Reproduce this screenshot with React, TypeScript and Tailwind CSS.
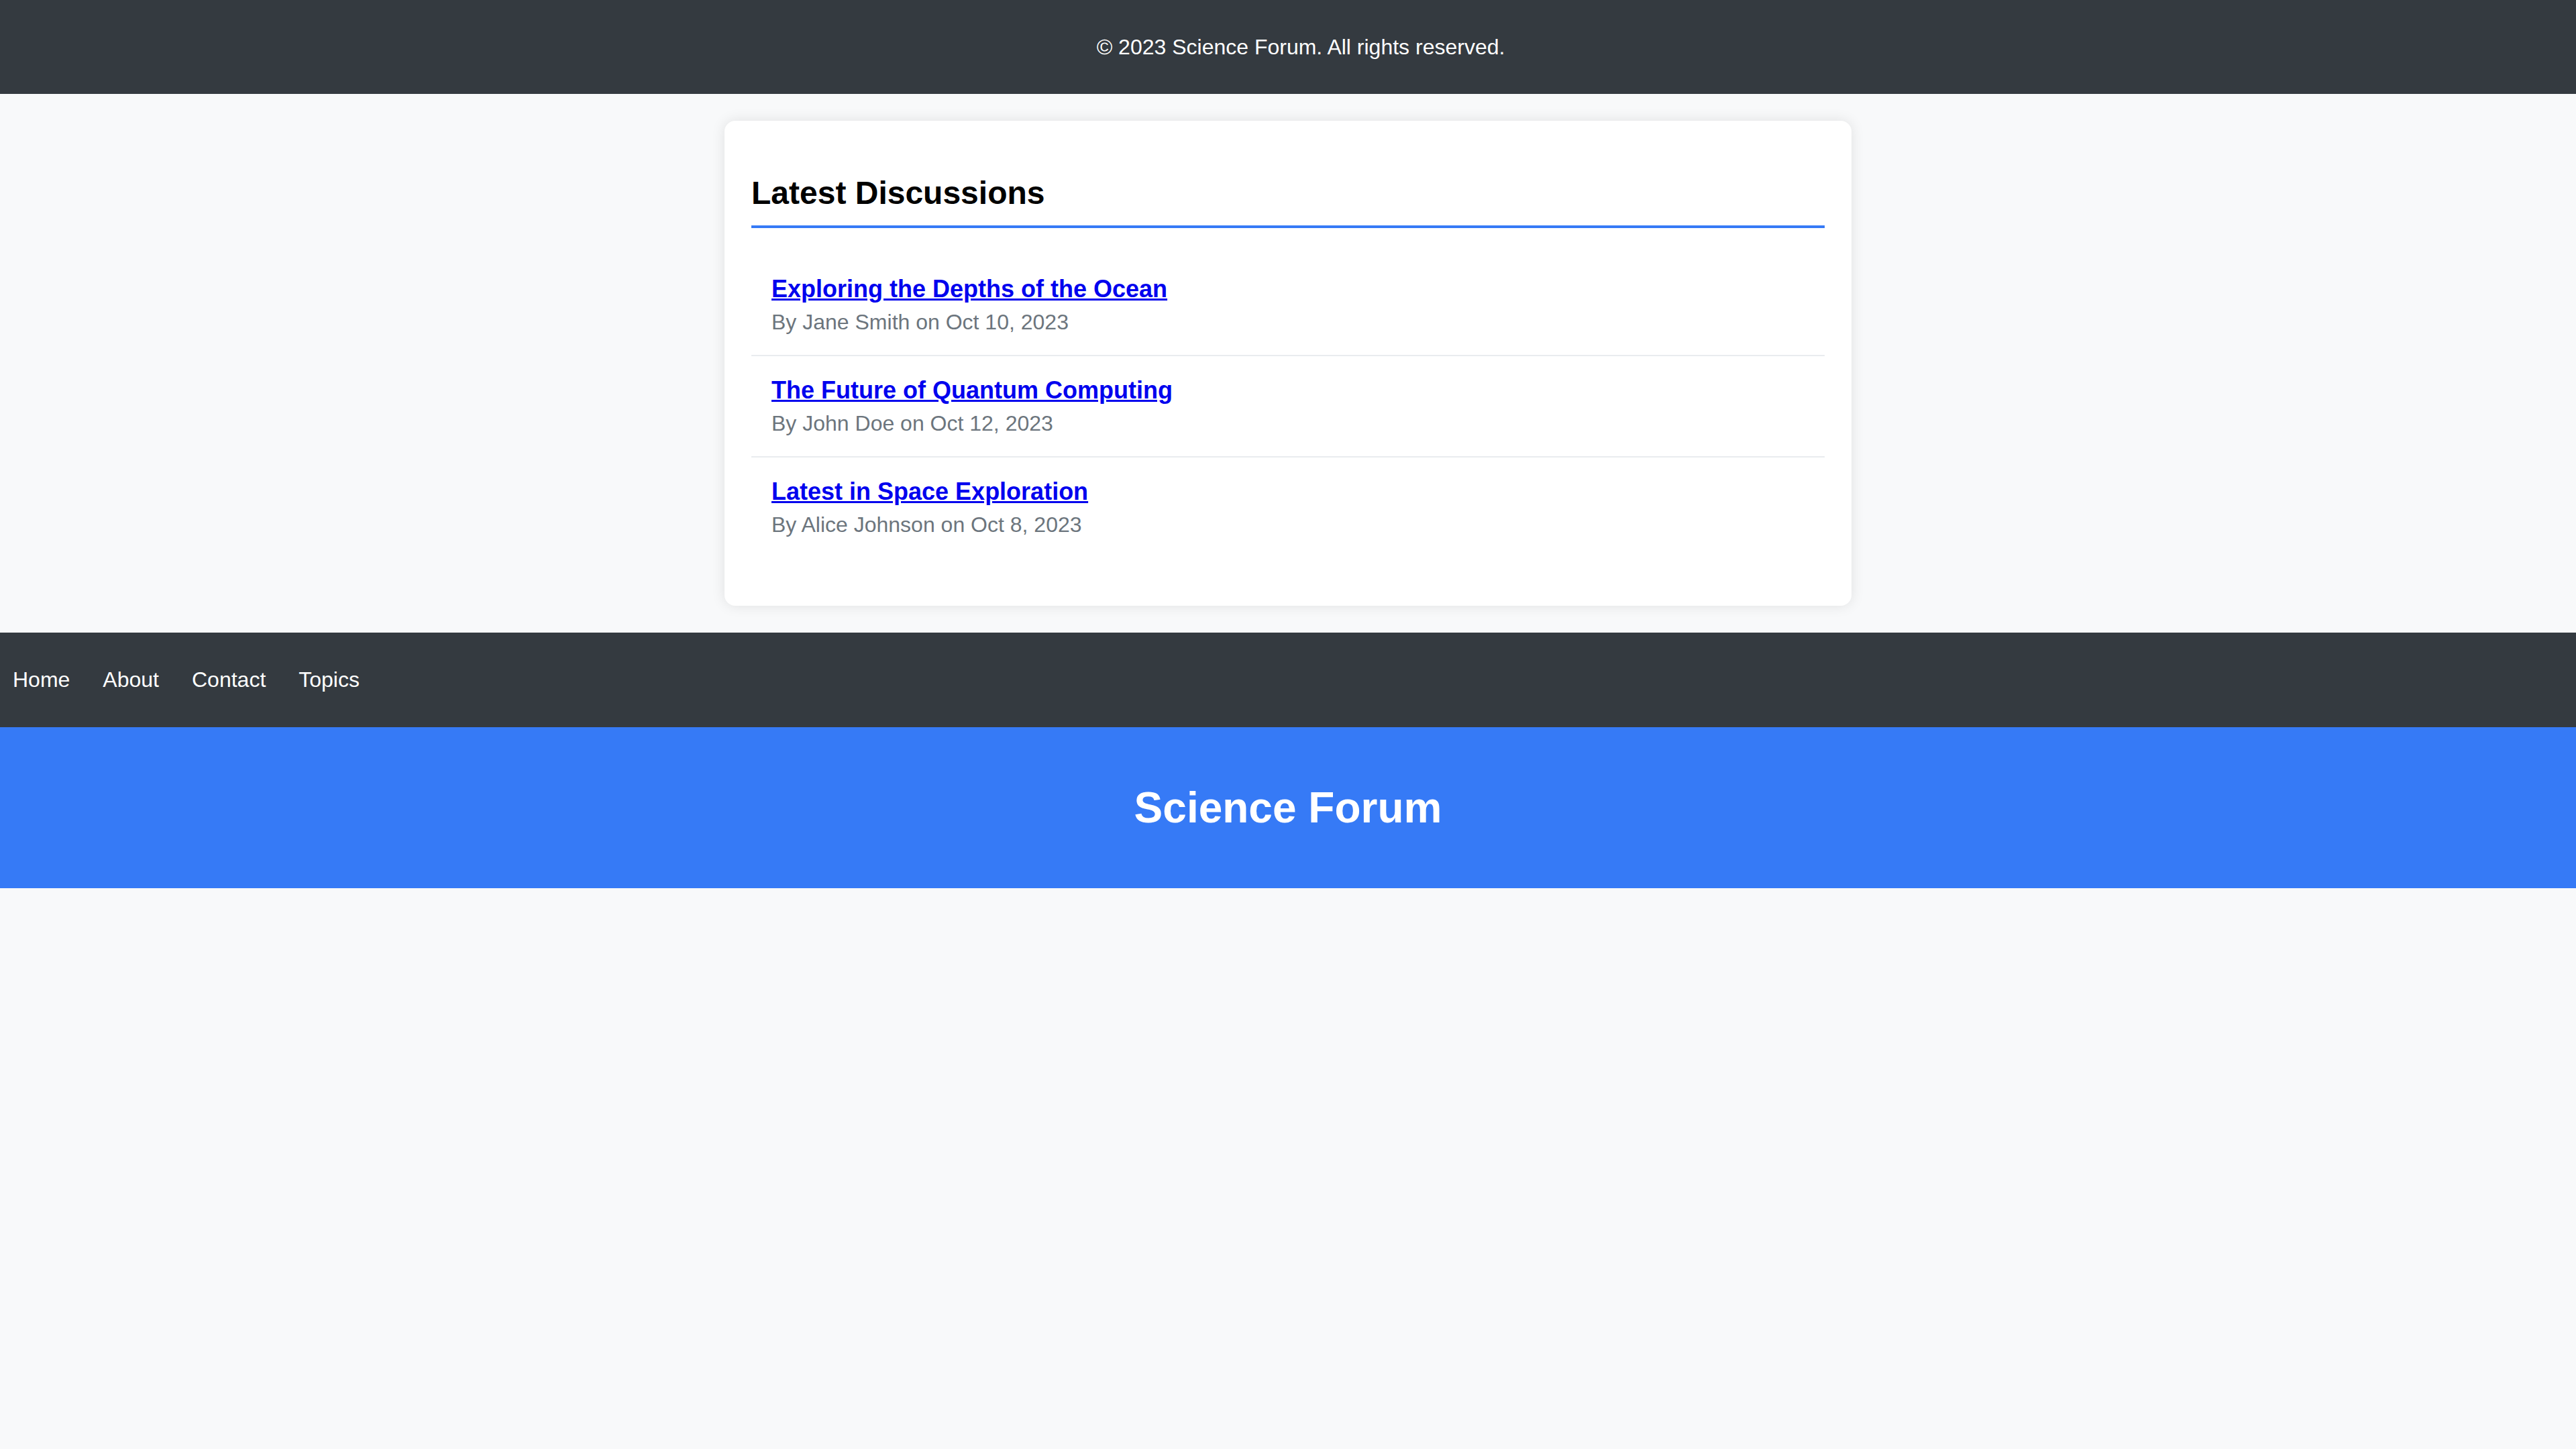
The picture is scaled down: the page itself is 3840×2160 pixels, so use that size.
const discussions = [
  { title: "Exploring the Depths of the Ocean", author: "Jane Smith", date: "Oct 10, 2023" },
  { title: "The Future of Quantum Computing", author: "John Doe", date: "Oct 12, 2023" },
  { title: "Latest in Space Exploration", author: "Alice Johnson", date: "Oct 8, 2023" },
]

const links = ["Home", "About", "Contact", "Topics"]

export default function App() {
  return (
    <div className="min-h-screen bg-[#f8f9fa] font-['Liberation_Sans',Arial,sans-serif] text-black">
      {/* Footer (rendered first) */}
      <footer className="bg-[#343a40] py-[20px] pl-[38px] text-center text-white">
        <p className="my-[32px] text-[32px] leading-[36px]">© 2023 Science Forum. All rights reserved.</p>
      </footer>

      {/* Discussions card */}
      <main className="mx-auto my-[40px] w-[1680px] rounded-[16px] bg-white p-[40px] shadow-[0_0_20px_rgba(0,0,0,0.1)]">
        <h2 className="mt-[40px] mb-[40px] border-b-4 border-[#367af6] pb-[21px] text-[48px] font-bold leading-[55px]">
          Latest Discussions
        </h2>
        <ul className="mb-[32px]">
          {discussions.map((d) => (
            <li key={d.title} className="border-b-2 border-[#e9ecef] p-[30px] last:border-b-0">
              <a href="#" className="block w-fit text-[36px] font-bold leading-[42px] text-[#0000ee] underline">
                {d.title}
              </a>
              <p className="mt-[10px] text-[32px] leading-[37px] text-[#6c757d]">
                By {d.author} on {d.date}
              </p>
            </li>
          ))}
        </ul>
      </main>

      {/* Nav */}
      <nav className="flex h-[141px] items-center gap-[49px] bg-[#343a40] px-[19px]">
        {links.map((l) => (
          <a key={l} href="#" className="text-[32px] leading-[37px] text-white">
            {l}
          </a>
        ))}
      </nav>

      {/* Header */}
      <header className="bg-[#367af6] py-[40px] text-center text-white">
        <h1 className="my-[43px] text-[64px] font-bold leading-[74px]">Science Forum</h1>
      </header>
    </div>
  )
}
